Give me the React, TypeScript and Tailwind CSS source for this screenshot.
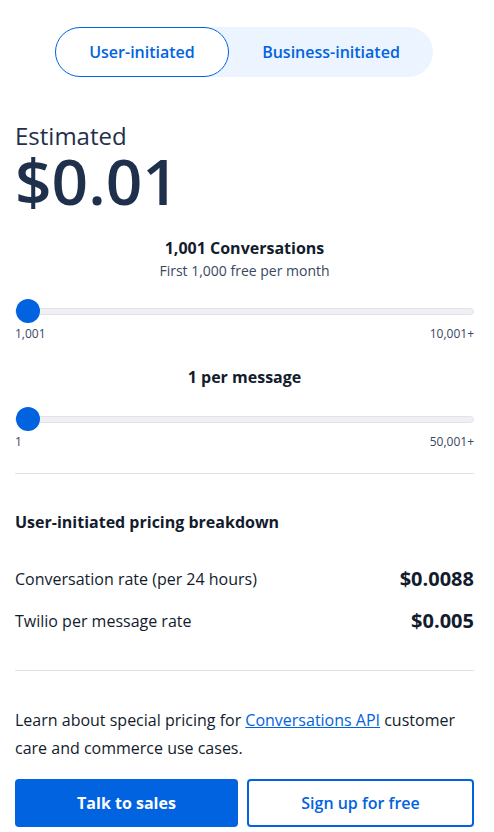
const font = { fontFamily: "'Open Sans', 'Noto Sans', sans-serif" };

function Slider({ min, max }: { min: string; max: string }) {
  return (
    <div>
      <div className="relative h-6 flex items-center">
        <div className="h-[7px] w-full rounded-full bg-[#f0f0f4] border border-[#e1e3ea]" />
        <div className="absolute left-[1px] top-0 h-6 w-6 rounded-full bg-[#0263e0]" />
      </div>
      <div className="mt-[3px] flex justify-between text-[12px] leading-[16px] text-[#394762]">
        <span>{min}</span>
        <span>{max}</span>
      </div>
    </div>
  );
}

export default function App() {
  return (
    <div className="min-h-[832px] w-[494px] bg-white text-[#121c2d]" style={font}>
      <div className="pl-[15px] pr-[20px] pt-[27px]">
        {/* toggle */}
        <div className="flex h-[50px] w-[378px] rounded-full bg-[#ebf4ff] ml-[40px]">
          <button className="h-[50px] w-[174px] rounded-full border border-[#0263e0] bg-white text-[16px] font-semibold text-[#0263e0]">
            User-initiated
          </button>
          <button className="h-[50px] flex-1 rounded-full text-[16px] font-semibold text-[#0263e0]">
            Business-initiated
          </button>
        </div>

        <div className="mt-[44px] text-[24px] leading-[30px] text-[#1f304c]">Estimated</div>
        <div className="-mt-[4px] text-[64px] leading-[68px] font-semibold text-[#1f304c]">$0.01</div>

        <div className="mt-[21px] text-center">
          <div className="text-[16px] leading-[24px] font-bold text-[#121c2d]">1,001 Conversations</div>
          <div className="text-[14px] leading-[21px] text-[#394762]">First 1,000 free per month</div>
        </div>
        <div className="mt-[18px]">
          <Slider min="1,001" max="10,001+" />
        </div>

        <div className="mt-[23px] text-center text-[16px] leading-[24px] font-bold">1 per message</div>
        <div className="mt-[18px]">
          <Slider min="1" max="50,001+" />
        </div>

        <hr className="mt-[23px] border-t border-[#e1e3ea]" />

        <div className="mt-[37px] text-[16px] leading-[22px] font-bold">User-initiated pricing breakdown</div>

        <div className="mt-[34px] flex items-center justify-between">
          <span className="text-[16px] leading-[24px] text-[#121c2d]">Conversation rate (per 24 hours)</span>
          <span className="text-[20px] leading-[24px] font-bold">$0.0088</span>
        </div>
        <div className="mt-[18px] flex items-center justify-between">
          <span className="text-[16px] leading-[24px] text-[#121c2d]">Twilio per message rate</span>
          <span className="text-[20px] leading-[24px] font-bold">$0.005</span>
        </div>

        <hr className="mt-[37px] border-t border-[#e1e3ea]" />

        <p className="mt-[35px] text-[16px] leading-[28px] text-[#121c2d]">
          Learn about special pricing for{" "}
          <a href="#" className="text-[#0263e0] underline">Conversations API</a> customer care and commerce use cases.
        </p>

        <div className="mt-[17px] flex gap-[9px]">
          <button className="h-[48px] flex-1 rounded-[4px] bg-[#0263e0] text-[16px] font-bold text-white">
            Talk to sales
          </button>
          <button className="h-[48px] flex-1 rounded-[4px] border-2 border-[#0263e0] bg-white text-[16px] font-semibold text-[#0263e0]">
            Sign up for free
          </button>
        </div>
      </div>
    </div>
  );
}
